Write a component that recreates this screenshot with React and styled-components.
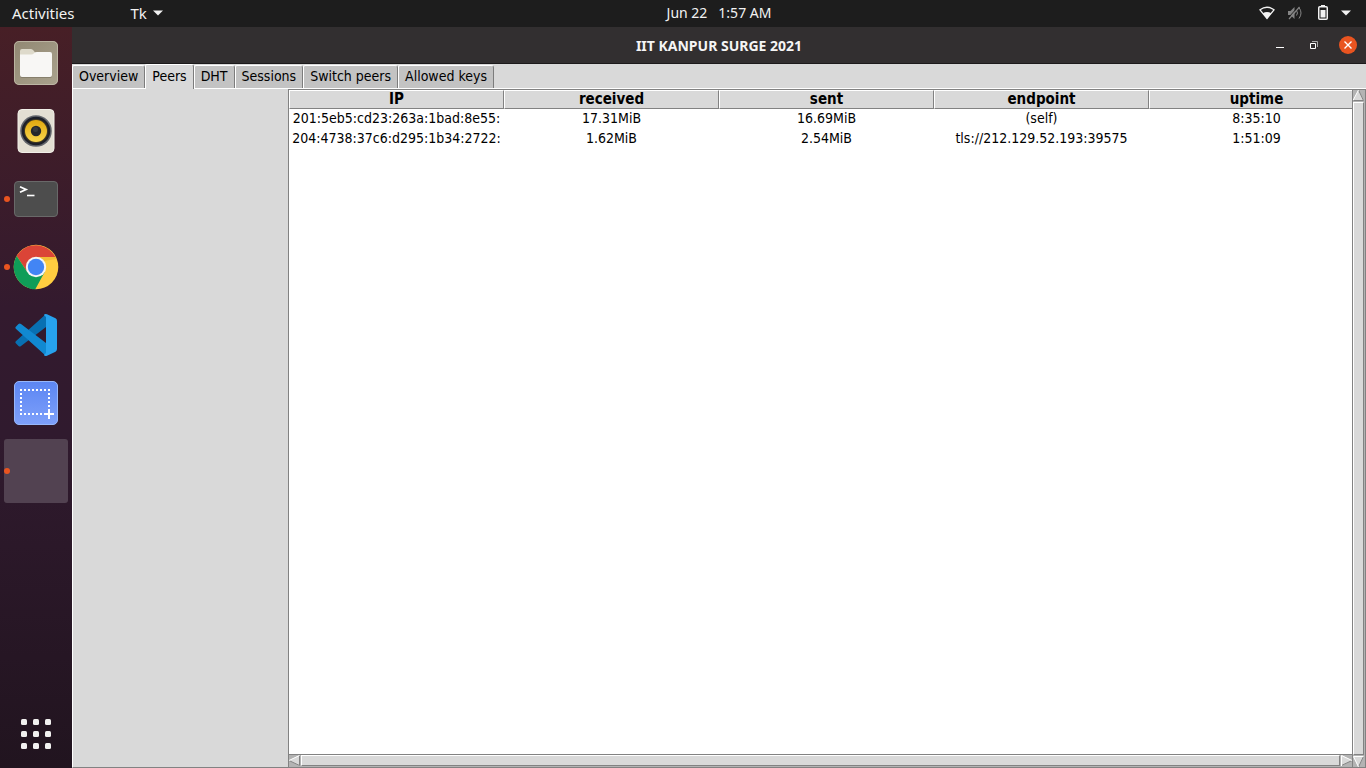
import React from "react";
import styled, { createGlobalStyle } from "styled-components";

const GlobalStyle = createGlobalStyle`
  * { box-sizing: border-box; }
  body { margin: 0; overflow: hidden; font-family: "DejaVu Sans Condensed", "DejaVu Sans", sans-serif; }
  button { font: inherit; color: inherit; margin: 0; padding: 0; border: 0; background: none; }
  svg { display: block; }
`;

const Desktop = styled.div`
  display: grid;
  grid-template: 27px minmax(0, 1fr) / 72px minmax(0, 1fr);
  height: 100vh;
`;

const TopBar = styled.header`
  grid-column: 1 / -1;
  display: grid;
  grid-template-columns: 72px 1fr auto 1fr;
  align-items: center;
  padding-bottom: 2px;
  background: #1d1d1d;
  color: #f2f2f2;
  font: 14px "Noto Sans", sans-serif;
`;

const MenuGroup = styled.nav`
  grid-column: 1 / 3;
  display: flex;
  align-items: center;
  gap: 56px;
  padding-left: 12px;
  font-size: 15px;
`;

const BarButton = styled.button`
  display: flex;
  align-items: center;
  gap: 6px;
`;

const Clock = styled(BarButton)`
  gap: 11px;
`;

const StatusButton = styled(BarButton)`
  justify-self: end;
  gap: 12px;
  padding-right: 15px;
`;

const Dock = styled.nav`
  display: flex;
  flex-direction: column;
  align-items: center;
  gap: 4px;
  padding: 4px 4px 2px;
  background: linear-gradient(#471f26, #331a2e 38%, #301a2e 55%, #21141f);
`;

const DockButton = styled.button`
  position: relative;
  display: grid;
  place-items: center;
  width: 64px;
  height: 64px;
  border-radius: 3px;
  background: ${(p) => (p.$active ? "#524251" : "none")};
  margin-top: ${(p) => (p.$last ? "auto" : "0")};
`;

const RunningDot = styled.span`
  position: absolute;
  left: 0;
  top: 29px;
  width: 6px;
  height: 6px;
  border-radius: 50%;
  background: #e95420;
`;

const Window = styled.main`
  display: flex;
  flex-direction: column;
  min-height: 0;
  background: #d9d9d9;
  color: #000;
`;

const TitleBar = styled.div`
  display: grid;
  grid-template-columns: 1fr auto 1fr;
  align-items: center;
  height: 37px;
  background: #322f30;
  border-bottom: 1px solid #1c1a1b;
  color: #f5f5f5;
`;

const Title = styled.h1`
  grid-column: 2;
  margin: 0;
  font: bold 14px "Noto Sans", sans-serif;
`;

const WindowControls = styled.div`
  display: flex;
  justify-content: flex-end;
  gap: 16px;
  padding-right: 9px;
`;

const ControlButton = styled.button`
  display: grid;
  place-items: center;
  width: 18px;
  height: 18px;
  border-radius: 50%;
  background: ${(p) => (p.$close ? "#e95420" : "none")};
`;

const TabList = styled.div`
  display: flex;
  height: 25px;
  border-bottom: 1px solid #fff;
`;

const Tab = styled.button`
  height: ${(p) => (p.$selected ? "25px" : "23px")};
  margin-top: ${(p) => (p.$selected ? "0" : "1px")};
  padding: 0 6px 2px;
  border: 1px solid #fff;
  border-right-color: #7c7c7c;
  border-bottom: 0;
  border-radius: 2px 3px 0 0;
  background: ${(p) => (p.$selected ? "#d9d9d9" : "#c3c3c3")};
  font-size: 14px;
  line-height: 20px;
  white-space: nowrap;
`;

const Panel = styled.section`
  flex: 1;
  min-height: 0;
  display: grid;
  grid-template-columns: 215px minmax(0, 1fr);
  border-left: 1px solid #fff;
  border-bottom: 1px solid #828282;
`;

const TreePane = styled.div`
  grid-column: 2;
  display: grid;
  grid-template: minmax(0, 1fr) 13px / minmax(0, 1fr) 14px;
  border: 1px solid #828282;
  border-width: 1px 0 0 1px;
  min-height: 0;
`;

const TableView = styled.div`
  overflow: hidden;
  background: #fff;
`;

const PeerTable = styled.table`
  width: 100%;
  min-width: 1075px;
  table-layout: fixed;
  border-collapse: separate;
  border-spacing: 0;
  font-size: 14px;
`;

const HeadCell = styled.th`
  height: 19px;
  padding: 0;
  border: 1px solid #fff;
  border-right-color: #828282;
  border-bottom-color: #828282;
  background: #d9d9d9;
  font-size: 15px;
  line-height: 17px;
`;

const Cell = styled.td`
  height: 20px;
  padding: 0 0 2px;
  line-height: 18px;
  text-align: center;
  white-space: nowrap;
`;

const ScrollBar = styled.div`
  display: flex;
  flex-direction: ${(p) => (p.$vertical ? "column" : "row")};
  gap: 1px;
  padding: ${(p) => (p.$vertical ? "0 1px 0 0" : "0 0 1px")};
  background: #b3b3b3;
  border: 1px solid #828282;
  border-width: ${(p) => (p.$vertical ? "0 1px" : "1px 0 0")};
  grid-row: ${(p) => (p.$vertical ? "1 / 3" : "2")};
  grid-column: ${(p) => (p.$vertical ? "2" : "1")};
`;

const ScrollThumb = styled.div`
  flex: 1;
  border: 1px solid #fff;
  border-right-color: #828282;
  border-bottom-color: #828282;
  background: #d9d9d9;
`;

const ArrowButton = styled.button`
  display: block;
  width: 11px;
  height: 11px;
`;

const ARROWS = {
  up: ["M5.5 0 L11 10.5 H0 Z", "M0 10.5 L5.5 0", "M5.5 0 L10.5 10.5 H0"],
  down: ["M0 .5 H11 L5.5 11 Z", "M5.5 11 L.5 .5 H10.5", "M10.5 .5 L5.5 11"],
  left: ["M0 5.5 L10.5 0 V11 Z", "M0 5.5 L10.5 .5", "M10.5 .5 V10.5 L0 5.5"],
  right: ["M.5 0 L11 5.5 L.5 11 Z", "M.5 11 V.5 L11 5.5", "M11 5.5 L.5 10.5"],
};

function ScrollArrow({ dir }) {
  const [fill, light, dark] = ARROWS[dir];
  return (
    <ArrowButton aria-label={`Scroll ${dir}`}>
      <svg width="11" height="11" viewBox="0 0 11 11" fill="none">
        <path d={fill} fill="#d9d9d9" />
        <path d={dark} stroke="#828282" />
        <path d={light} stroke="#fff" />
      </svg>
    </ArrowButton>
  );
}

const Caret = () => (
  <svg width="10" height="6" viewBox="0 0 10 6"><path d="M0 .5h10L5 5.5z" fill="#f2f2f2" /></svg>
);

const FilesIcon = () => (
  <svg width="46" height="46" viewBox="0 0 46 46">
    <defs>
      <linearGradient id="files" x2="1" y2="1"><stop offset="0" stopColor="#918873" /><stop offset="1" stopColor="#aaa28d" /></linearGradient>
    </defs>
    <rect x="1" y="1" width="44" height="44" rx="5" fill="url(#files)" />
    <rect x="1.5" y="1.5" width="43" height="43" rx="4.5" fill="none" stroke="#c5bfae" strokeOpacity=".75" />
    <path d="M7 11q0-2 2-2h9q1.500 0 2.500 1.500l2 2.500v5H7z" fill="#dedacb" />
    <path d="M7 14.500h11q2 0 3-1.200 1-1.300 3-1.300h13q2 0 2 2v21q0 2-2 2H9q-2 0-2-2z" fill="#756e5b" transform="translate(0 1)" opacity=".6" />
    <path d="M7 14.500h11q2 0 3-1.200 1-1.300 3-1.300h13q2 0 2 2v21q0 2-2 2H9q-2 0-2-2z" fill="#f8f7f5" />
  </svg>
);

const SpeakerIcon = () => (
  <svg width="46" height="46" viewBox="0 0 46 46">
    <defs>
      <linearGradient id="cone" x2="0" y2="1"><stop offset="0" stopColor="#e0a80f" /><stop offset="1" stopColor="#f8d64c" /></linearGradient>
    </defs>
    <rect x="5" y="1.500" width="36" height="43" rx="4" fill="#e3dfd3" stroke="#f1efe8" />
    <circle cx="23" cy="23" r="15.800" fill="#62656b" />
    <circle cx="23" cy="23" r="14.300" fill="#1d2029" />
    <circle cx="23" cy="23" r="12" fill="#443a22" />
    <circle cx="23" cy="23" r="11" fill="url(#cone)" />
    <circle cx="23" cy="23" r="5.200" fill="#25282b" />
    <circle cx="22.500" cy="21.500" r="2.500" fill="#373b3e" />
  </svg>
);

const TerminalIcon = () => (
  <svg width="46" height="38" viewBox="0 0 46 38">
    <rect x="1.500" y="1.500" width="43" height="35" rx="3.500" fill="#4d4d4d" stroke="#696969" />
    <path d="M7 6.800l6 2.700-6 2.800" fill="none" stroke="#fff" strokeWidth="1.800" />
    <path d="M14 15.500h7.500" stroke="#fff" strokeWidth="1.600" />
  </svg>
);

const ChromeIcon = () => (
  <svg width="46" height="46" viewBox="0 0 46 46">
    <circle cx="23" cy="23" r="22.300" fill="#ffcd40" />
    <path d="M3.700 11.900A22.300 22.300 0 0 1 42.300 12.900H23L14.300 28z" fill="#db4437" />
    <path d="M3.700 11.900A22.300 22.300 0 0 0 22.300 45.300L31.700 28L14.300 28z" fill="#0f9d58" />
    <path d="M23 12.900H42.300l1 2L31 17z" fill="#d99b25" opacity=".35" />
    <circle cx="23" cy="23" r="10.200" fill="#f5f5f5" />
    <circle cx="23" cy="23" r="8.200" fill="#4285f4" />
  </svg>
);

const CodeIcon = () => (
  <svg width="44" height="44" viewBox="0 0 44 44">
    <path d="M32 1L1.800 28.200q-1 1 0 2L4.500 33q1.200 1 2.500 0L32 14z" fill="#0870b2" />
    <path d="M32 43L1.800 15.800q-1-1 0-2L4.500 11q1.200-1 2.500 0L32 30z" fill="#1189d1" />
    <path d="M33 1.200l8.500 4.100q1.500.8 1.500 2.600v28.200q0 1.800-1.500 2.600L33 42.800q-2 .8-3.200-.8L32 40V4L29.800 2q1.200-1.600 3.200-.8z" fill="#27a2ed" />
  </svg>
);

const ScreenshotIcon = () => (
  <svg width="46" height="46" viewBox="0 0 46 46">
    <defs>
      <linearGradient id="shot" x2="0" y2="1"><stop offset="0" stopColor="#5c86f3" /><stop offset="1" stopColor="#7ea0fa" /></linearGradient>
    </defs>
    <rect x="1.500" y="1.500" width="43" height="43" rx="4.500" fill="url(#shot)" stroke="#97b7fb" />
    <g fill="none" stroke="#fff" strokeWidth="2" strokeDasharray="2 2">
      <path d="M7 10h30M7 34h24M8 13v20M36 13v16" />
    </g>
    <path d="M36 29v10M31 34h10" stroke="#fff" strokeWidth="2" />
  </svg>
);

const AppsIcon = () => (
  <svg width="30" height="30" viewBox="0 0 30 30" fill="#f2f1f0">
    {[0, 12, 24].map((y) => [0, 12, 24].map((x) => <rect key={`${x}-${y}`} x={x} y={y} width="6" height="6" rx="1.500" />))}
  </svg>
);

const WifiIcon = () => (
  <svg width="16" height="14" viewBox="0 0 16 14">
    <path d="M1 3.800Q8-1.300 15 3.800L8 12.500z" fill="none" stroke="#f2f2f2" strokeWidth="1.300" />
    <path d="M3.800 7.200Q8 5 12.200 7.200L8 12.700z" fill="#f2f2f2" />
  </svg>
);

const MutedIcon = () => (
  <svg width="16" height="14" viewBox="0 0 16 14" fill="none" stroke="#858585">
    <path d="M1 5h2.500L7.500 1v12L3.500 9H1z" fill="#858585" stroke="none" />
    <path d="M9.500 4.500q2 2.500 0 5M12 1.500q4 5.500 0 11" />
    <path d="M12 0L1 12" stroke="#1d1d1d" />
    <path d="M12.500 1L2 13" strokeWidth="1.200" />
  </svg>
);

const BatteryIcon = () => (
  <svg width="14" height="15" viewBox="-3 0 14 15" fill="#f2f2f2">
    <path d="M3 0h4v2H3z" />
    <rect x=".75" y="1.750" width="8.500" height="12.500" rx="1" fill="none" stroke="#f2f2f2" strokeWidth="1.500" />
    <path d="M2.500 5h5v7.500h-5z" />
  </svg>
);

const MinimizeIcon = () => (
  <svg width="8" height="8" viewBox="0 0 8 8"><path d="M0 6.500h8" stroke="#fff" /></svg>
);

const RestoreIcon = () => (
  <svg width="8" height="8" viewBox="0 0 8 8" fill="none">
    <path d="M2 .5h5.500V6" stroke="#aaa" />
    <path d="M.5 2.500h5v5h-5z" stroke="#fff" />
  </svg>
);

const CloseIcon = () => (
  <svg width="8" height="8" viewBox="0 0 8 8"><path d="M.5.5l7 7m0-7l-7 7" stroke="#fff" strokeWidth="1.400" /></svg>
);

const DOCK_ITEMS = [
  { name: "Files", Icon: FilesIcon },
  { name: "Rhythmbox", Icon: SpeakerIcon },
  { name: "Terminal", Icon: TerminalIcon, running: true },
  { name: "Chrome", Icon: ChromeIcon, running: true },
  { name: "Code", Icon: CodeIcon },
  { name: "Screenshot", Icon: ScreenshotIcon },
  { name: "Tk", running: true, active: true },
];

const TABS = ["Overview", "Peers", "DHT", "Sessions", "Switch peers", "Allowed keys"];
const COLUMNS = ["IP", "received", "sent", "endpoint", "uptime"];
const PEERS = [
  ["201:5eb5:cd23:263a:1bad:8e55:", "17.31MiB", "16.69MiB", "(self)", "8:35:10"],
  ["204:4738:37c6:d295:1b34:2722:", "1.62MiB", "2.54MiB", "tls://212.129.52.193:39575", "1:51:09"],
];

export default function App() {
  return (
    <Desktop>
      <GlobalStyle />
      <TopBar>
        <MenuGroup>
          <BarButton>Activities</BarButton>
          <BarButton>Tk <Caret /></BarButton>
        </MenuGroup>
        <Clock><span>Jun 22</span><span>1:57 AM</span></Clock>
        <StatusButton aria-label="System menu">
          <WifiIcon /><MutedIcon /><BatteryIcon /><Caret />
        </StatusButton>
      </TopBar>
      <Dock>
        {DOCK_ITEMS.map(({ name, Icon, running, active }) => (
          <DockButton key={name} aria-label={name} $active={active}>
            {Icon && <Icon />}
            {running && <RunningDot />}
          </DockButton>
        ))}
        <DockButton aria-label="Show applications" $last><AppsIcon /></DockButton>
      </Dock>
      <Window>
        <TitleBar>
          <Title>IIT KANPUR SURGE 2021</Title>
          <WindowControls>
            <ControlButton aria-label="Minimize"><MinimizeIcon /></ControlButton>
            <ControlButton aria-label="Restore"><RestoreIcon /></ControlButton>
            <ControlButton aria-label="Close" $close><CloseIcon /></ControlButton>
          </WindowControls>
        </TitleBar>
        <TabList role="tablist">
          {TABS.map((tab) => (
            <Tab key={tab} role="tab" aria-selected={tab === "Peers"} $selected={tab === "Peers"}>{tab}</Tab>
          ))}
        </TabList>
        <Panel>
          <TreePane>
            <TableView>
              <PeerTable>
                <thead>
                  <tr>{COLUMNS.map((c) => <HeadCell key={c} scope="col">{c}</HeadCell>)}</tr>
                </thead>
                <tbody>
                  {PEERS.map((row) => (
                    <tr key={row[0]}>{row.map((v) => <Cell key={v}>{v}</Cell>)}</tr>
                  ))}
                </tbody>
              </PeerTable>
            </TableView>
            <ScrollBar $vertical>
              <ScrollArrow dir="up" /><ScrollThumb /><ScrollArrow dir="down" />
            </ScrollBar>
            <ScrollBar>
              <ScrollArrow dir="left" /><ScrollThumb /><ScrollArrow dir="right" />
            </ScrollBar>
          </TreePane>
        </Panel>
      </Window>
    </Desktop>
  );
}
